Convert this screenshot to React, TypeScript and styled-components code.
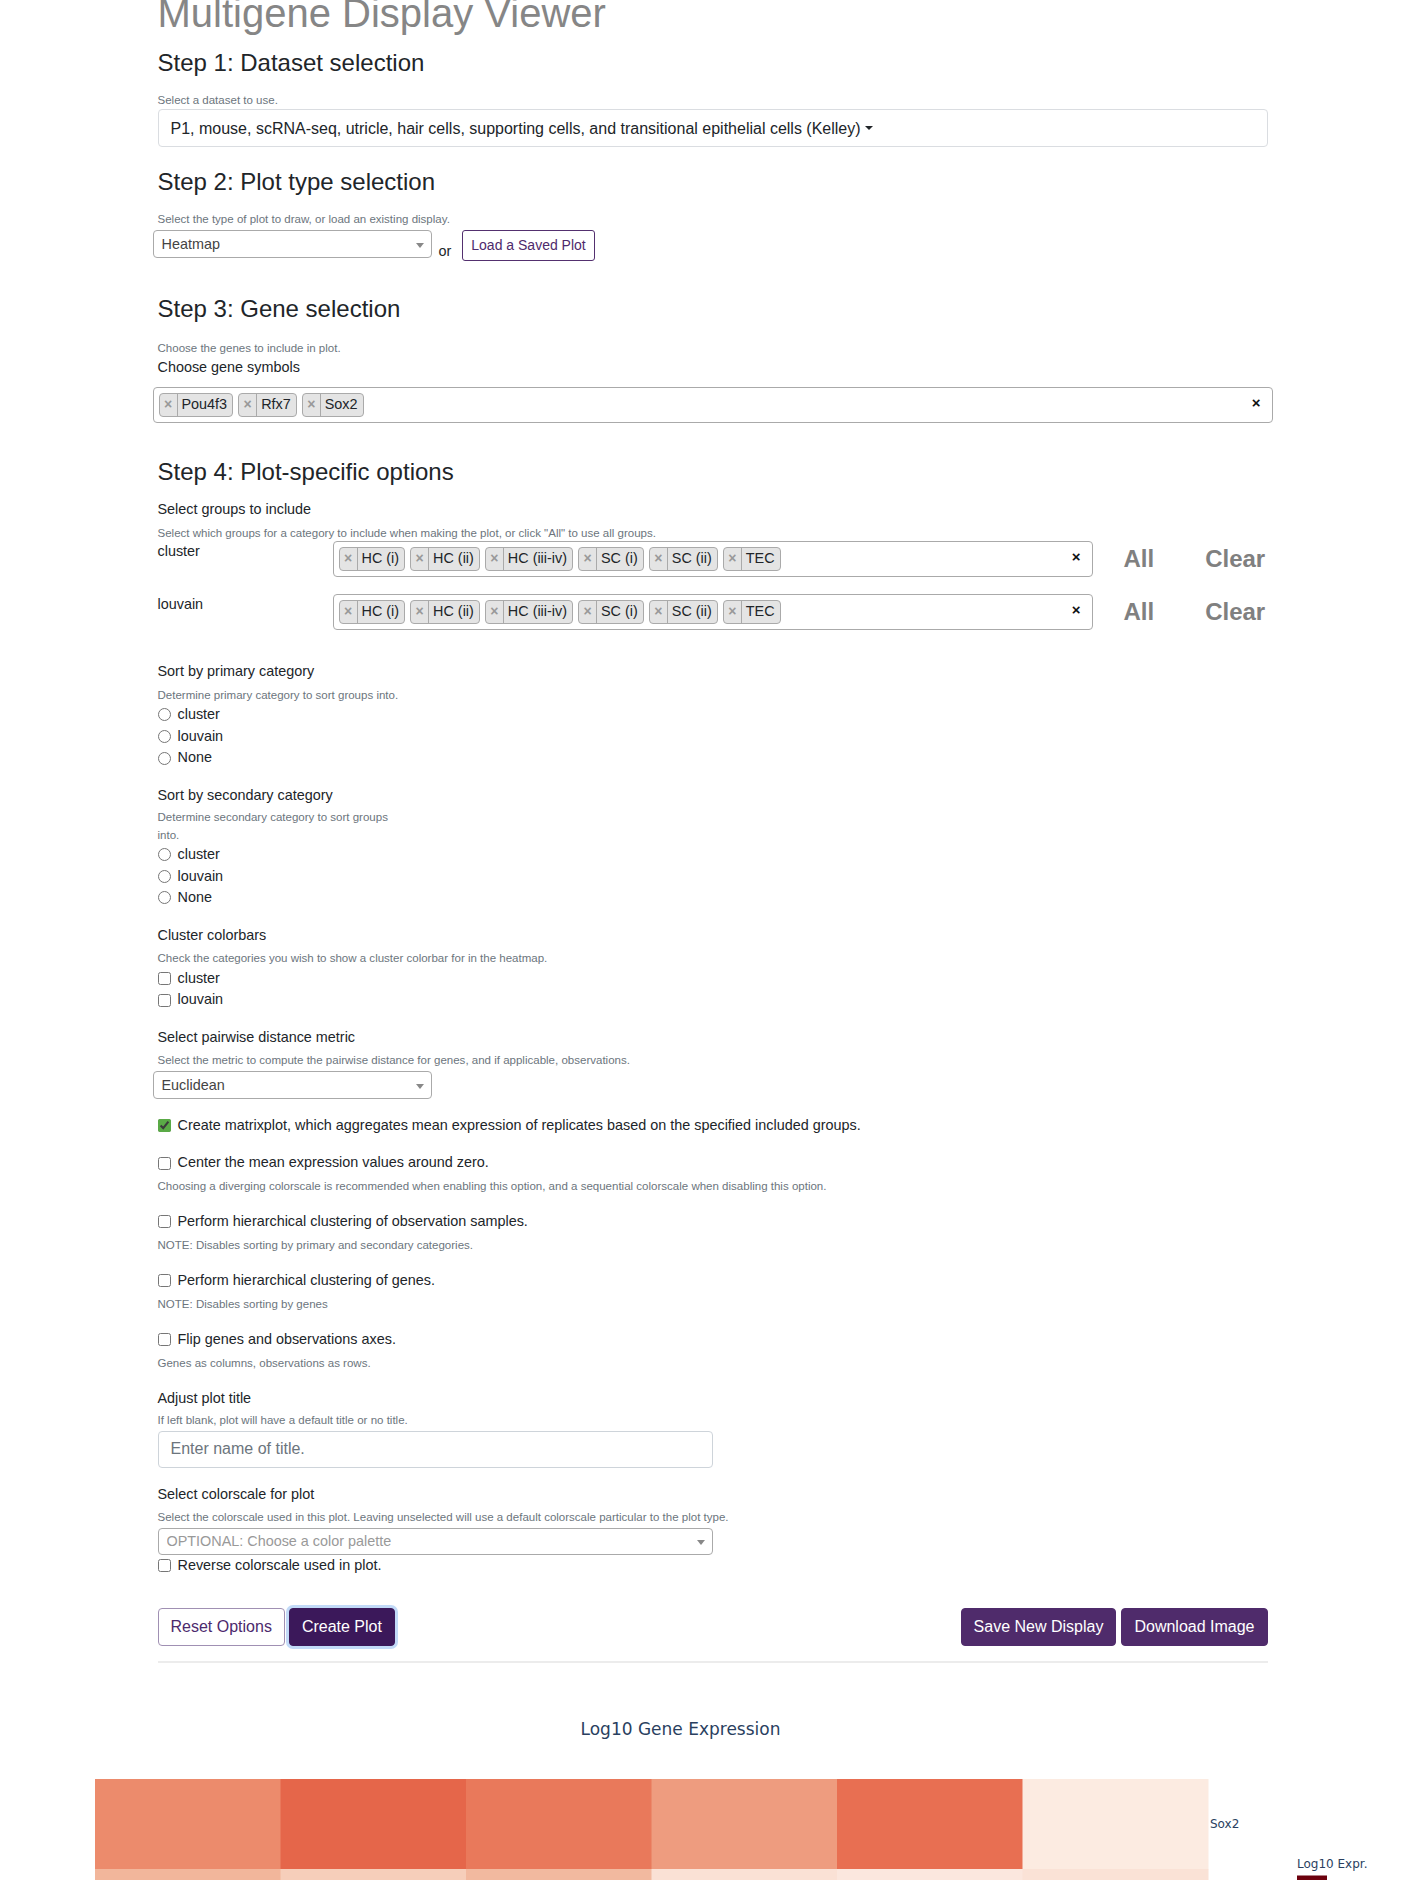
import React from "react";
import styled, { createGlobalStyle } from "styled-components";

const GlobalStyle = createGlobalStyle`
  html, body { margin: 0; padding: 0; background: #ffffff; }
  body {
    font-family: "Liberation Sans", Arial, Helvetica, sans-serif;
    color: #212529;
  }
  *, *::before, *::after { box-sizing: border-box; }
`;

const Container = styled.main`
  width: 1110px;
  margin: 0 auto;
`;

const PageTitle = styled.h1`
  margin: -11px 0 0;
  font-size: 40px;
  line-height: 48px;
  font-weight: 400;
  color: #868686;
`;

const StepHeading = styled.h4<{ $mt: number }>`
  margin: ${(p) => p.$mt}px 0 0;
  font-size: 24px;
  line-height: 28.8px;
  font-weight: 400;
  color: #212529;
`;

const HelpText = styled.small<{ $mt?: number; $width?: number }>`
  display: block;
  margin-top: ${(p) => p.$mt ?? 4}px;
  font-size: 11.52px;
  line-height: 17.28px;
  color: #6c757d;
  ${(p) => (p.$width ? `width: ${p.$width}px;` : "")}
`;

const FieldLabel = styled.div<{ $mt?: number }>`
  margin-top: ${(p) => p.$mt ?? 0}px;
  font-size: 14.4px;
  line-height: 21.6px;
  color: #212529;
`;

const DatasetBox = styled.div`
  height: 38px;
  border: 1px solid #dadde1;
  border-radius: 4px;
  padding: 7px 12px 0;
  font-size: 16px;
  line-height: 24px;
  color: #212529;
  white-space: nowrap;
`;

const Caret = styled.span`
  display: inline-block;
  margin-left: 4px;
  vertical-align: 4px;
  border-top: 4.8px solid #212529;
  border-right: 4.8px solid transparent;
  border-left: 4.8px solid transparent;
  border-bottom: 0;
`;

const ControlRow = styled.div<{ $mt?: number }>`
  display: flex;
  align-items: flex-start;
  margin-top: ${(p) => p.$mt ?? 0}px;
`;

const SelectBox = styled.div<{ $width: number; $height: number; $offset?: number; $mt?: number }>`
  display: flex;
  align-items: center;
  flex: none;
  width: ${(p) => p.$width}px;
  height: ${(p) => p.$height}px;
  margin-left: ${(p) => p.$offset ?? 0}px;
  margin-top: ${(p) => p.$mt ?? 0}px;
  padding-left: 8px;
  border: 1px solid #aaaaaa;
  border-radius: 4px;
  background: #ffffff;
  font-size: 14.4px;
`;

const SelectValue = styled.span<{ $placeholder?: boolean }>`
  flex: 1;
  white-space: nowrap;
  overflow: hidden;
  color: ${(p) => (p.$placeholder ? "#999999" : "#444444")};
`;

const SelectArrow = styled.span`
  flex: none;
  width: 0;
  height: 0;
  margin: 3px 7px 0 0;
  border-style: solid;
  border-width: 5px 4px 0 4px;
  border-color: #888888 transparent transparent transparent;
`;

const OrText = styled.span`
  margin: 11px 11px 0 7px;
  font-size: 14.4px;
  line-height: 21.6px;
`;

const SmallOutlineButton = styled.button`
  padding: 4px 8px;
  font-family: inherit;
  font-size: 14px;
  line-height: 21px;
  color: #4e2a6c;
  background: #ffffff;
  border: 1px solid #53306f;
  border-radius: 3px;
`;

const TagSelect = styled.div<{ $width?: number; $bleed?: boolean }>`
  display: flex;
  flex-wrap: wrap;
  align-items: flex-start;
  flex: none;
  ${(p) => (p.$width ? `width: ${p.$width}px;` : "")}
  ${(p) => (p.$bleed ? "margin: 0 -5px;" : "")}
  min-height: 32px;
  padding: 0 5px 5px 0;
  border: 1px solid #aaaaaa;
  border-radius: 4px;
  background: #ffffff;
`;

const GeneSelectWrap = styled.div`
  margin-top: 8px;
`;

const Tag = styled.span`
  display: inline-flex;
  margin: 5px 0 0 5px;
  background: #e4e4e4;
  border: 1px solid #aaaaaa;
  border-radius: 4px;
  font-size: 14.4px;
  line-height: 21.6px;
  color: #212529;
  white-space: nowrap;
`;

const TagRemove = styled.span`
  width: 18px;
  text-align: center;
  border-right: 1px solid #aaaaaa;
  color: #999999;
  font-weight: 700;
  font-size: 14px;
`;

const TagText = styled.span`
  padding: 0 5px 0 4px;
`;

const ClearAll = styled.span`
  margin: 5px 5px 0 auto;
  padding: 1px;
  height: 20px;
  font-size: 15px;
  line-height: 18px;
  font-weight: 700;
  color: #111111;
`;

const GroupRow = styled.div<{ $mt: number }>`
  display: flex;
  align-items: flex-start;
  margin-top: ${(p) => p.$mt}px;
`;

const GroupLabel = styled.div`
  flex: none;
  width: 175px;
  font-size: 14.4px;
  line-height: 21.6px;
`;

const GroupActions = styled.div`
  display: flex;
  gap: 51px;
  margin-left: 31px;
`;

const ActionLink = styled.span`
  font-size: 24px;
  line-height: 36px;
  font-weight: 700;
  color: #808080;
`;

const OptionList = styled.div``;

const OptionRow = styled.label<{ $mt?: number }>`
  display: flex;
  align-items: center;
  gap: 7px;
  margin-top: ${(p) => p.$mt ?? 0}px;
  font-size: 14.4px;
  line-height: 21.6px;
  color: #212529;
`;

const RadioInput = styled.input`
  flex: none;
  width: 13px;
  height: 13px;
  margin: 0;
`;

const CheckInput = styled.input`
  flex: none;
  width: 13px;
  height: 13px;
  margin: 0;
  accent-color: #5aaa46;
`;

const TextInput = styled.input`
  display: block;
  width: 555px;
  height: 37px;
  margin-top: 1px;
  padding: 6px 12px;
  font-family: inherit;
  font-size: 16px;
  line-height: 24px;
  color: #495057;
  border: 1px solid #ced4da;
  border-radius: 4px;
  &::placeholder {
    color: #6c757d;
  }
`;

const ButtonBar = styled.div`
  display: flex;
  justify-content: space-between;
  margin-top: 32px;
`;

const ButtonGroup = styled.div<{ $gap: number }>`
  display: flex;
  gap: ${(p) => p.$gap}px;
`;

const ActionButton = styled.button<{ $variant: "outline" | "dark" | "primary"; $focused?: boolean }>`
  padding: 6px 12px;
  font-family: inherit;
  font-size: 16px;
  line-height: 24px;
  border-radius: 4px;
  border: 1px solid
    ${(p) => (p.$variant === "outline" ? "#a090b3" : p.$variant === "dark" ? "#3b185a" : "#4f2b6b")};
  background: ${(p) => (p.$variant === "outline" ? "#ffffff" : p.$variant === "dark" ? "#3b185a" : "#4f2b6b")};
  color: ${(p) => (p.$variant === "outline" ? "#4c2a6d" : "#ffffff")};
  box-shadow: ${(p) => (p.$focused ? "0 0 0 3px #c2daf8" : "none")};
`;

const Divider = styled.hr`
  height: 2px;
  margin: 15px 0 0;
  border: 0;
  background: #ececec;
`;

const PlotSection = styled.section`
  margin-top: 16px;
  padding-left: 15px;
`;

const PlotSvg = styled.svg`
  display: block;
  font-family: "DejaVu Sans", Verdana, Arial, sans-serif;
`;

const genes = ["Sox2", "Rfx7", "Pou4f3"];
const groups = ["HC (i)", "HC (ii)", "HC (iii-iv)", "SC (i)", "SC (ii)", "TEC"];
const heat: string[][] = [
  ["#ec8b6c", "#e5664a", "#e9795b", "#ee9c7f", "#e86f52", "#fcebe1"],
  ["#f2b69b", "#f6ceba", "#f2b99f", "#fae1d5", "#fbe7de", "#fae2d6"],
  ["#b31419", "#a10f15", "#c4171c", "#fee3d6", "#fdd5c3", "#fff1ea"],
];

const TagList: React.FC<{ items: string[] }> = ({ items }) => (
  <>
    {items.map((t) => (
      <Tag key={t}>
        <TagRemove>×</TagRemove>
        <TagText>{t}</TagText>
      </Tag>
    ))}
    <ClearAll>×</ClearAll>
  </>
);

const Radio: React.FC<{ name: string; label: string }> = ({ name, label }) => (
  <OptionRow>
    <RadioInput type="radio" name={name} />
    {label}
  </OptionRow>
);

const Check: React.FC<{ label: string; checked?: boolean; mt?: number }> = ({ label, checked, mt }) => (
  <OptionRow $mt={mt}>
    <CheckInput type="checkbox" defaultChecked={checked} />
    {label}
  </OptionRow>
);

const HeatmapPlot: React.FC = () => {
  const left = 80;
  const top = 100;
  const cw = 185.5;
  const rh = 90;
  return (
    <PlotSvg width={1400} height={450} viewBox="0 0 1400 450">
      <defs>
        <linearGradient id="reds" x1="0" y1="0" x2="0" y2="1">
          <stop offset="0" stopColor="#67000d" />
          <stop offset="0.25" stopColor="#cb181d" />
          <stop offset="0.5" stopColor="#fb6a4a" />
          <stop offset="0.75" stopColor="#fcbba1" />
          <stop offset="1" stopColor="#fff5f0" />
        </linearGradient>
      </defs>
      <text x={665.5} y={50} textAnchor="middle" dominantBaseline="central" fontSize={17} fill="#2a3f5f">
        Log10 Gene Expression
      </text>
      {heat.map((row, r) =>
        row.map((c, i) => (
          <rect key={`${r}-${i}`} x={left + i * cw} y={top + r * rh} width={cw + 0.5} height={rh + 0.5} fill={c} />
        ))
      )}
      {genes.map((g, r) => (
        <text key={g} x={left + 6 * cw + 2} y={top + r * rh + rh / 2} dominantBaseline="central" fontSize={12} fill="#2a3f5f">
          {g}
        </text>
      ))}
      {groups.map((g, i) => (
        <text key={g} x={left + i * cw + cw / 2} y={top + 3 * rh + 16} textAnchor="middle" fontSize={12} fill="#2a3f5f">
          {g}
        </text>
      ))}
      <text x={1282} y={185} dominantBaseline="central" fontSize={12} fill="#2a3f5f">
        Log10 Expr.
      </text>
      <rect x={1282} y={196.5} width={30} height={170} fill="url(#reds)" />
      {["1.5", "1", "0.5"].map((t, i) => (
        <text key={t} x={1316} y={235 + i * 45} dominantBaseline="central" fontSize={12} fill="#2a3f5f">
          {t}
        </text>
      ))}
    </PlotSvg>
  );
};

export default function App() {
  return (
    <>
      <GlobalStyle />
      <Container>
        <PageTitle>Multigene Display Viewer</PageTitle>

        <StepHeading $mt={12}>Step 1: Dataset selection</StepHeading>
        <HelpText $mt={14}>Select a dataset to use.</HelpText>
        <DatasetBox>
          P1, mouse, scRNA-seq, utricle, hair cells, supporting cells, and transitional epithelial cells (Kelley)
          <Caret />
        </DatasetBox>

        <StepHeading $mt={21}>Step 2: Plot type selection</StepHeading>
        <HelpText $mt={14.5}>Select the type of plot to draw, or load an existing display.</HelpText>
        <ControlRow $mt={1}>
          <SelectBox $width={279} $height={28} $offset={-5}>
            <SelectValue>Heatmap</SelectValue>
            <SelectArrow />
          </SelectBox>
          <OrText>or</OrText>
          <SmallOutlineButton type="button">Load a Saved Plot</SmallOutlineButton>
        </ControlRow>

        <StepHeading $mt={33}>Step 3: Gene selection</StepHeading>
        <HelpText $mt={16}>Choose the genes to include in plot.</HelpText>
        <FieldLabel>Choose gene symbols</FieldLabel>
        <GeneSelectWrap>
          <TagSelect $bleed>
            <TagList items={["Pou4f3", "Rfx7", "Sox2"]} />
          </TagSelect>
        </GeneSelectWrap>

        <StepHeading $mt={35}>Step 4: Plot-specific options</StepHeading>
        <FieldLabel $mt={13}>Select groups to include</FieldLabel>
        <HelpText>Select which groups for a category to include when making the plot, or click "All" to use all groups.</HelpText>
        <GroupRow $mt={-1}>
          <GroupLabel>cluster</GroupLabel>
          <TagSelect $width={760}>
            <TagList items={groups} />
          </TagSelect>
          <GroupActions>
            <ActionLink>All</ActionLink>
            <ActionLink>Clear</ActionLink>
          </GroupActions>
        </GroupRow>
        <GroupRow $mt={17}>
          <GroupLabel>louvain</GroupLabel>
          <TagSelect $width={760}>
            <TagList items={groups} />
          </TagSelect>
          <GroupActions>
            <ActionLink>All</ActionLink>
            <ActionLink>Clear</ActionLink>
          </GroupActions>
        </GroupRow>

        <FieldLabel $mt={31}>Sort by primary category</FieldLabel>
        <HelpText>Determine primary category to sort groups into.</HelpText>
        <OptionList>
          <Radio name="primary" label="cluster" />
          <Radio name="primary" label="louvain" />
          <Radio name="primary" label="None" />
        </OptionList>

        <FieldLabel $mt={16}>Sort by secondary category</FieldLabel>
        <HelpText $mt={3} $width={240}>Determine secondary category to sort groups into.</HelpText>
        <OptionList>
          <Radio name="secondary" label="cluster" />
          <Radio name="secondary" label="louvain" />
          <Radio name="secondary" label="None" />
        </OptionList>

        <FieldLabel $mt={16}>Cluster colorbars</FieldLabel>
        <HelpText>Check the categories you wish to show a cluster colorbar for in the heatmap.</HelpText>
        <OptionList>
          <Check label="cluster" />
          <Check label="louvain" />
        </OptionList>

        <FieldLabel $mt={16}>Select pairwise distance metric</FieldLabel>
        <HelpText>Select the metric to compute the pairwise distance for genes, and if applicable, observations.</HelpText>
        <SelectBox $width={279} $height={28} $offset={-5} $mt={1}>
          <SelectValue>Euclidean</SelectValue>
          <SelectArrow />
        </SelectBox>

        <Check mt={16} checked label="Create matrixplot, which aggregates mean expression of replicates based on the specified included groups." />

        <Check mt={16} label="Center the mean expression values around zero." />
        <HelpText>Choosing a diverging colorscale is recommended when enabling this option, and a sequential colorscale when disabling this option.</HelpText>

        <Check mt={16} label="Perform hierarchical clustering of observation samples." />
        <HelpText>NOTE: Disables sorting by primary and secondary categories.</HelpText>

        <Check mt={16} label="Perform hierarchical clustering of genes." />
        <HelpText>NOTE: Disables sorting by genes</HelpText>

        <Check mt={16} label="Flip genes and observations axes." />
        <HelpText>Genes as columns, observations as rows.</HelpText>

        <FieldLabel $mt={16}>Adjust plot title</FieldLabel>
        <HelpText $mt={3}>If left blank, plot will have a default title or no title.</HelpText>
        <TextInput type="text" placeholder="Enter name of title." />

        <FieldLabel $mt={16}>Select colorscale for plot</FieldLabel>
        <HelpText>Select the colorscale used in this plot. Leaving unselected will use a default colorscale particular to the plot type.</HelpText>
        <SelectBox $width={555} $height={27} $mt={1}>
          <SelectValue $placeholder>OPTIONAL: Choose a color palette</SelectValue>
          <SelectArrow />
        </SelectBox>
        <Check label="Reverse colorscale used in plot." />

        <ButtonBar>
          <ButtonGroup $gap={4}>
            <ActionButton type="button" $variant="outline">Reset Options</ActionButton>
            <ActionButton type="button" $variant="dark" $focused>Create Plot</ActionButton>
          </ButtonGroup>
          <ButtonGroup $gap={5}>
            <ActionButton type="button" $variant="primary">Save New Display</ActionButton>
            <ActionButton type="button" $variant="primary">Download Image</ActionButton>
          </ButtonGroup>
        </ButtonBar>
        <Divider />
      </Container>
      <PlotSection>
        <HeatmapPlot />
      </PlotSection>
    </>
  );
}
